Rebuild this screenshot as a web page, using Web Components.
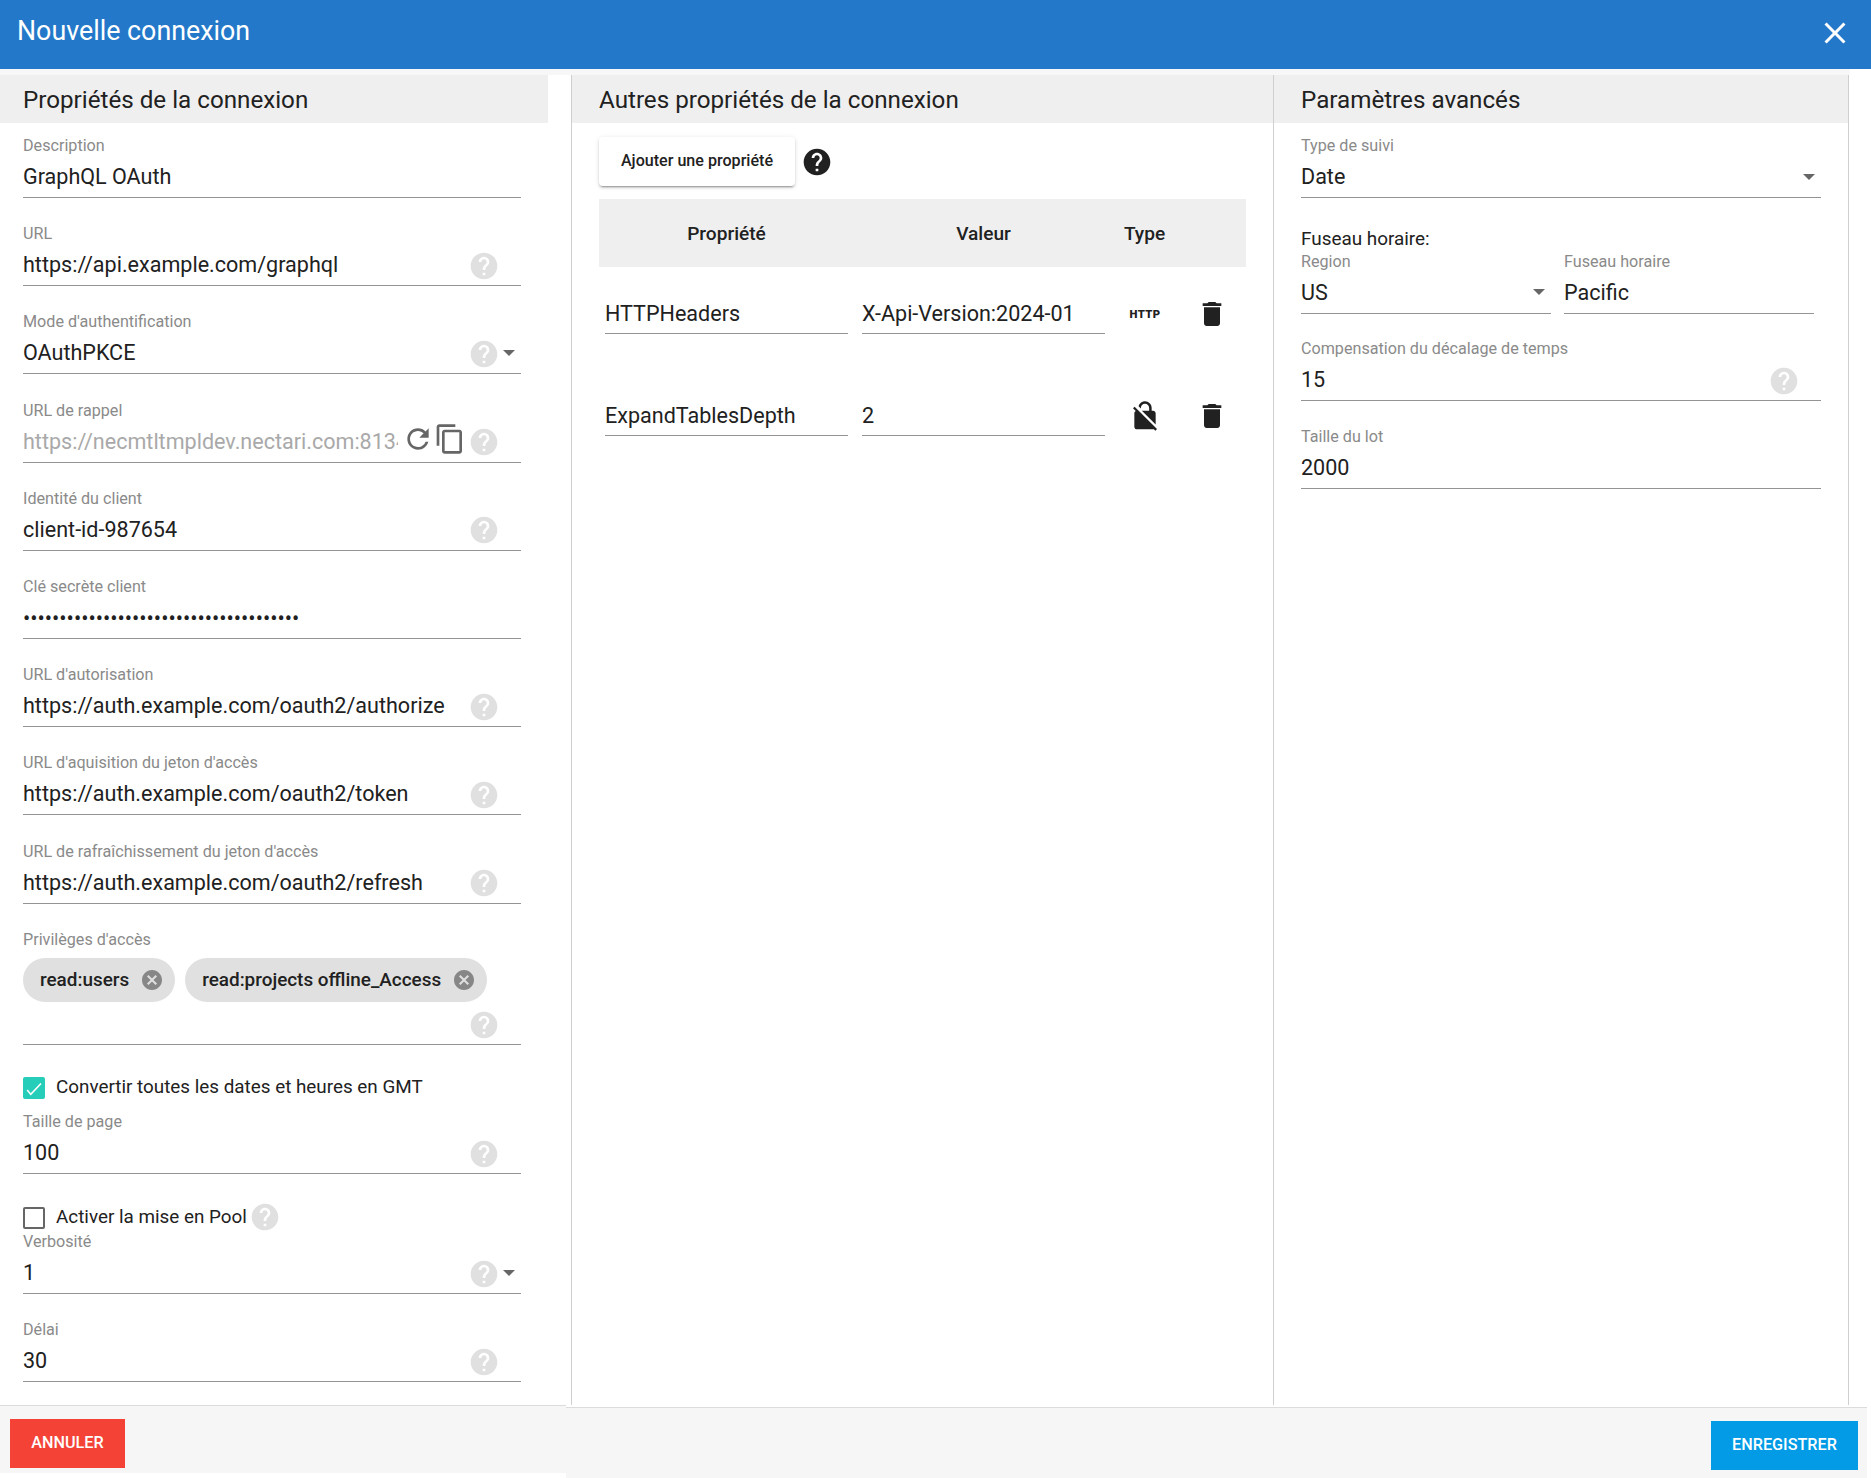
<!DOCTYPE html>
<html>
<head>
<meta charset="utf-8">
<title>Nouvelle connexion</title>
<style>
    html, body { margin: 0; padding: 0; background: #fff; }
    body { font-family: Roboto, "Liberation Sans", sans-serif; color: #212121; }
</style>
</head>
<body>

<conn-dialog heading="Nouvelle connexion">

    <conn-panel slot="left" heading="Propriétés de la connexion" style="width:572px" data-pad="23" data-right="50">
        <conn-field label="Description" value="GraphQL OAuth"></conn-field>
        <conn-field label="URL" value="https://api.example.com/graphql" help></conn-field>
        <conn-field label="Mode d'authentification" value="OAuthPKCE" help arrow></conn-field>
        <conn-field label="URL de rappel" value="https://necmtltmpldev.nectari.com:8134" help disabled actions></conn-field>
        <conn-field label="Identité du client" value="client-id-987654" help></conn-field>
        <conn-field label="Clé secrète client" value="••••••••••••••••••••••••••••••••••••••" secret></conn-field>
        <conn-field label="URL d'autorisation" value="https://auth.example.com/oauth2/authorize" help></conn-field>
        <conn-field label="URL d'aquisition du jeton d'accès" value="https://auth.example.com/oauth2/token" help></conn-field>
        <conn-field label="URL de rafraîchissement du jeton d'accès" value="https://auth.example.com/oauth2/refresh" help></conn-field>
        <conn-chips label="Privilèges d'accès">
            <conn-chip>read:users</conn-chip>
            <conn-chip>read:projects offline_Access</conn-chip>
        </conn-chips>
        <conn-check checked label="Convertir toutes les dates et heures en GMT" style="margin-top:32.5px"></conn-check>
        <conn-field label="Taille de page" value="100" help style="margin-top:13px"></conn-field>
        <conn-check label="Activer la mise en Pool" help style="margin-top:33px"></conn-check>
        <conn-field label="Verbosité" value="1" help arrow style="margin-top:3px"></conn-field>
        <conn-field label="Délai" value="30" help></conn-field>
    </conn-panel>

    <conn-panel slot="middle" heading="Autres propriétés de la connexion" style="width:702px" data-pad="27" data-right="0">
        <conn-props></conn-props>
    </conn-panel>

    <conn-panel slot="right" heading="Paramètres avancés" style="width:575px" data-pad="27" data-right="0">
        <conn-field label="Type de suivi" value="Date" arrow style="margin-right:27px"></conn-field>
        <div style="font-size:18.9px;line-height:22px;margin:29.5px 0 2px;color:#212121">Fuseau horaire:</div>
        <div style="display:flex;gap:13px;margin-right:34px">
            <conn-field label="Region" value="US" arrow style="flex:1;margin-bottom:25.5px"></conn-field>
            <conn-field label="Fuseau horaire" value="Pacific" style="flex:1;margin-bottom:25.5px"></conn-field>
        </div>
        <conn-field label="Compensation du décalage de temps" value="15" help style="margin-right:27px"></conn-field>
        <conn-field label="Taille du lot" value="2000" style="margin-right:27px"></conn-field>
    </conn-panel>

</conn-dialog>

<script>
    const ICONS = {
        help: 'M12 2C6.48 2 2 6.48 2 12s4.48 10 10 10 10-4.48 10-10S17.52 2 12 2zm1 17h-2v-2h2v2zm2.07-7.75l-.9.92C13.45 12.9 13 13.5 13 15h-2v-.5c0-1.1.45-2.1 1.17-2.83l1.24-1.26c.37-.36.59-.86.59-1.41 0-1.1-.9-2-2-2s-2 .9-2 2H8c0-2.21 1.79-4 4-4s4 1.79 4 4c0 .88-.36 1.68-.93 2.25z',
        refresh: 'M17.65 6.35C16.2 4.9 14.21 4 12 4c-4.42 0-7.99 3.58-7.99 8s3.57 8 7.99 8c3.73 0 6.84-2.55 7.73-6h-2.08c-.82 2.33-3.04 4-5.65 4-3.31 0-6-2.69-6-6s2.69-6 6-6c1.66 0 3.14.69 4.22 1.78L13 11h7V4l-2.35 2.35z',
        copy: 'M16 1H4c-1.1 0-2 .9-2 2v14h2V3h12V1zm3 4H8c-1.1 0-2 .9-2 2v14c0 1.1.9 2 2 2h11c1.1 0 2-.9 2-2V7c0-1.1-.9-2-2-2zm0 16H8V7h11v14z',
        cancel: 'M12 2C6.47 2 2 6.47 2 12s4.47 10 10 10 10-4.47 10-10S17.53 2 12 2zm5 13.59L15.59 17 12 13.41 8.41 17 7 15.59 10.59 12 7 8.41 8.41 7 12 10.59 15.59 7 17 8.41 13.41 12 17 15.59z',
        trash: 'M6 19c0 1.1.9 2 2 2h8c1.1 0 2-.9 2-2V7H6v12zM19 4h-3.5l-1-1h-5l-1 1H5v2h14V4z',
        nolock: 'M21 21.78L4.22 5 3 6.22l2.04 2.04C4.42 8.6 4 9.25 4 10v10c0 1.1.9 2 2 2h12c.23 0 .45-.05.66-.12L19.78 23 21 21.78zM8.9 6c0-1.71 1.39-3.1 3.1-3.1s3.1 1.39 3.1 3.1v2H9.66L20 18.34V10c0-1.1-.9-2-2-2h-1V6c0-2.76-2.24-5-5-5-2.32 0-4.26 1.59-4.82 3.74L8.9 6.46V6z',
        close: 'M19 6.41L17.59 5 12 10.59 6.41 5 5 6.41 10.59 12 5 17.59 6.41 19 12 13.41 17.59 19 19 17.59 13.41 12z'
    };

    function icon(name, size, color) {
        return `<svg width="${size}" height="${size}" viewBox="0 0 24 24" fill="${color}" style="display:block;flex:none"><path d="${ICONS[name]}"/></svg>`;
    }

    window.customElements.define('conn-dialog', class extends HTMLElement {
        constructor() {
            super();
            let shadowRoot = this.attachShadow({mode: 'open'});
            shadowRoot.innerHTML = `
                <style>
                    :host { display: flex; flex-direction: column; width: 1871px; height: 1478px; overflow: hidden; background: #fff; }
                    header { flex: none; height: 69px; box-sizing: border-box; background: #2478c9; color: #fff; display: flex; justify-content: space-between; padding: 0 18px 0 17px; }
                    h1 { margin: 0; font-size: 26.8px; font-weight: 400; line-height: 63px; }
                    .close { margin-top: 15px; }
                    .band { flex: none; height: 6px; width: 1850px; background: #f7f7f7; }
                    main { flex: 1; min-height: 0; display: flex; }
                    footer { flex: none; height: 73px; display: flex; }
                    .fl { width: 566px; height: 68px; box-sizing: border-box; background: #f6f6f6; border-top: 1px solid #dcdcdc; padding: 13px 0 0 10px; }
                    .fr { width: 1301px; box-sizing: border-box; margin-top: 2px; background: #f6f6f6; border-top: 1px solid #dcdcdc; display: flex; justify-content: flex-end; padding: 13px 9px 0 0; }
                    button { border: 0; padding: 0 0 2px; height: 49px; color: #fff; font: 500 16.2px Roboto, sans-serif; text-transform: uppercase; }
                    .cancel { width: 115px; background: #f44336; }
                    .save { width: 147px; background: #039be5; }
                </style>
                <header>
                    <h1>${this.getAttribute('heading')}</h1>
                    <div class="close">${icon('close', 36, '#fff')}</div>
                </header>
                <div class="band"></div>
                <main>
                    <slot name="left"></slot>
                    <slot name="middle"></slot>
                    <slot name="right"></slot>
                </main>
                <footer>
                    <div class="fl"><button class="cancel">Annuler</button></div>
                    <div class="fr"><button class="save">Enregistrer</button></div>
                </footer>`;
        }
    });

    window.customElements.define('conn-panel', class extends HTMLElement {
        constructor() {
            super();
            let pad = this.getAttribute('data-pad');
            let right = this.getAttribute('data-right');
            let shadowRoot = this.attachShadow({mode: 'open'});
            shadowRoot.innerHTML = `
                <style>
                    :host { display: block; box-sizing: border-box; flex: none; height: 100%; overflow: hidden; border-right: 1px solid #cfcfcf; }
                    :host([slot="left"]) { --head-right: 23px; }
                    h2 { margin: 0 var(--head-right, 0) 0 0; height: 48px; padding-left: ${pad}px; background: #efefef; font-size: 24.2px; font-weight: 400; line-height: 50px; color: #212121; }
                    .body { padding: 13px ${right}px 0 ${pad}px; }
                </style>
                <h2>${this.getAttribute('heading')}</h2>
                <div class="body"><slot></slot></div>`;
        }
    });

    window.customElements.define('conn-help', class extends HTMLElement {
        constructor() {
            super();
            let color = this.getAttribute('color') || '#e0e0e0';
            this.attachShadow({mode: 'open'}).innerHTML = `<style>:host { display: block; flex: none; width: 32px; height: 32px; }</style>${icon('help', 32, color)}`;
        }
    });

    window.customElements.define('conn-field', class extends HTMLElement {
        constructor() {
            super();
            let has = n => this.hasAttribute(n);
            let shadowRoot = this.attachShadow({mode: 'open'});
            shadowRoot.innerHTML = `
                <style>
                    :host { display: block; margin-bottom: 26.2px; }
                    label { display: block; height: 20px; font-size: 16.15px; line-height: 20px; color: #8a8a8a; white-space: nowrap; }
                    .row { display: flex; align-items: center; height: 41px; border-bottom: 1px solid #949494; }
                    .value { flex: 1; min-width: 0; overflow: hidden; white-space: nowrap; font-size: 21.55px; color: #212121; }
                    .value.disabled { color: #a9a9a9; margin-right: 4px; }
                    .value.secret { margin-top: 2px; }
                    .actions { display: flex; margin: 0 2px 4px 0; }
                    .h { margin: 2px 21px 0 0; }
                    .h.a { margin-right: 0; }
                    .arrow { flex: none; width: 0; height: 0; border-left: 6px solid transparent; border-right: 6px solid transparent; border-top: 6px solid #666; margin: 0 6px 0 3px; }
                </style>
                <label>${this.getAttribute('label')}</label>
                <div class="row">
                    <div class="value ${has('disabled') ? 'disabled' : ''} ${has('secret') ? 'secret' : ''}">${this.getAttribute('value')}</div>
                    ${has('actions') ? `<div class="actions">${icon('refresh', 32, '#666')}${icon('copy', 32, '#666')}</div>` : ''}
                    ${has('help') ? `<conn-help class="h ${has('arrow') ? 'a' : ''}"></conn-help>` : ''}
                    ${has('arrow') ? '<div class="arrow"></div>' : ''}
                </div>`;
        }
    });

    window.customElements.define('conn-chip', class extends HTMLElement {
        constructor() {
            super();
            this.attachShadow({mode: 'open'}).innerHTML = `
                <style>
                    :host { display: inline-flex; align-items: center; height: 44px; border-radius: 22px; background: #e0e0e0; padding: 0 11px 0 17px; font-size: 18.9px; font-weight: 500; color: #212121; white-space: nowrap; }
                    svg { margin-left: 11px; }
                </style>
                <slot></slot>${icon('cancel', 24, '#878787')}`;
        }
    });

    window.customElements.define('conn-chips', class extends HTMLElement {
        constructor() {
            super();
            this.attachShadow({mode: 'open'}).innerHTML = `
                <style>
                    :host { display: block; }
                    label { display: block; height: 20px; font-size: 16.15px; line-height: 20px; color: #8a8a8a; }
                    .list { display: flex; gap: 10px; margin-top: 8px; }
                    .row { display: flex; justify-content: flex-end; align-items: center; box-sizing: border-box; height: 43px; padding: 4px 21px 0 0; border-bottom: 1px solid #949494; }
                </style>
                <label>${this.getAttribute('label')}</label>
                <div class="list"><slot></slot></div>
                <div class="row"><conn-help></conn-help></div>`;
        }
    });

    window.customElements.define('conn-check', class extends HTMLElement {
        constructor() {
            super();
            let checked = this.hasAttribute('checked');
            this.attachShadow({mode: 'open'}).innerHTML = `
                <style>
                    :host { display: flex; align-items: center; height: 22px; font-size: 18.85px; color: #212121; white-space: nowrap; }
                    .box { flex: none; box-sizing: border-box; width: 22px; height: 22px; margin-right: 11px; border-radius: 2px; border: 2px solid #666; display: flex; align-items: center; justify-content: center; }
                    .box.on { background: #26cdb9; border-color: #26cdb9; }
                    span { margin-bottom: 2px; }
                    conn-help { margin-left: 2px; margin-bottom: 2px; }
                </style>
                <div class="box ${checked ? 'on' : ''}">${checked ? '<svg width="16" height="16" viewBox="0 0 16 16" fill="none" stroke="#fff" stroke-width="1.6"><path d="M1.2 10l3.6 4.4L15 3.5"/></svg>' : ''}</div>
                <span>${this.getAttribute('label')}</span>
                ${this.hasAttribute('help') ? '<conn-help></conn-help>' : ''}`;
        }
    });

    window.customElements.define('conn-prop-row', class extends HTMLElement {
        constructor() {
            super();
            let type = this.getAttribute('type') === 'http'
                ? '<span class="http">HTTP</span>'
                : icon('nolock', 32, '#212121');
            this.attachShadow({mode: 'open'}).innerHTML = `
                <style>
                    :host { display: grid; grid-template-columns: 243px 243px 52px 54px; column-gap: 14px; height: 102px; padding-left: 6px; align-items: start; }
                    .input { height: 40px; border-bottom: 1px solid #949494; font-size: 21.55px; line-height: 41px; color: #212121; white-space: nowrap; }
                    .cell { height: 41px; padding-top: 1px; display: flex; align-items: center; justify-content: center; }
                    .http { font-size: 11.3px; font-weight: 900; letter-spacing: .4px; color: #212121; }
                </style>
                <div class="input">${this.getAttribute('name')}</div>
                <div class="input">${this.getAttribute('value')}</div>
                <div class="cell">${type}</div>
                <div class="cell">${icon('trash', 32, '#212121')}</div>`;
        }
    });

    window.customElements.define('conn-props', class extends HTMLElement {
        constructor() {
            super();
            this.attachShadow({mode: 'open'}).innerHTML = `
                <style>
                    :host { display: block; width: 647px; margin-top: 1px; }
                    .top { display: flex; align-items: center; gap: 6px; height: 49px; }
                    button { width: 196px; height: 49px; padding: 0 0 2px; border: 0; border-radius: 4px; background: #fff; font: 500 16.1px Roboto, sans-serif; color: #212121; box-shadow: 0 3px 1px -2px rgba(0,0,0,.2), 0 2px 2px 0 rgba(0,0,0,.14), 0 1px 5px 0 rgba(0,0,0,.12); }
                    .head { display: grid; grid-template-columns: 255px 259px 63px 70px; align-items: center; height: 68px; margin-top: 13px; background: #efefef; font-size: 19.1px; font-weight: 500; text-align: center; color: #212121; }
                    .rows { margin-top: 25.5px; }
                </style>
                <div class="top"><button>Ajouter une propriété</button><conn-help color="#212121"></conn-help></div>
                <div class="head"><span>Propriété</span><span>Valeur</span><span>Type</span><span></span></div>
                <div class="rows">
                    <conn-prop-row name="HTTPHeaders" value="X-Api-Version:2024-01" type="http"></conn-prop-row>
                    <conn-prop-row name="ExpandTablesDepth" value="2" type="nolock"></conn-prop-row>
                </div>`;
        }
    });
</script>
</body>
</html>
